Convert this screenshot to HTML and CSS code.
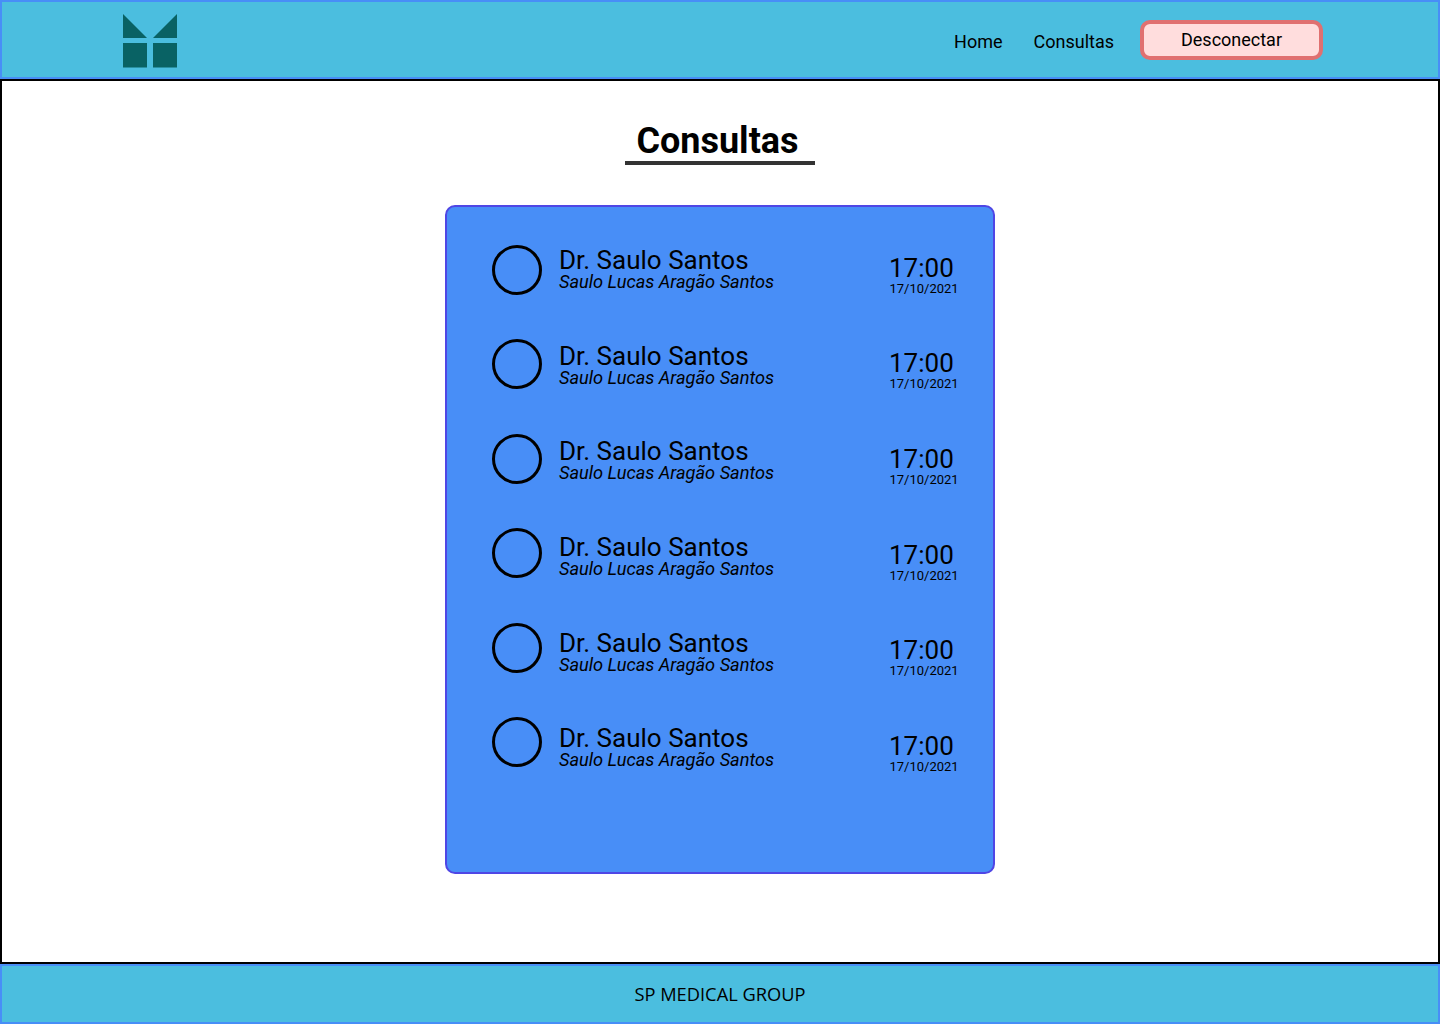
FILE: index.html
```html
<!DOCTYPE html>
<html lang="en">
<head>
    <meta charset="UTF-8">
    <meta name="viewport" content="width=device-width, initial-scale=1.0">
    <title>Consultas</title>
    <link rel="stylesheet" href="styles.css">
</head>
<body>
    <header class="topbar">
        <svg class="logo" width="54" height="54" viewBox="0 0 54 54">
            <path d="M0 0 L24 24 H0 Z M54 0 L30 24 H54 Z M0 29 H24 V53.5 H0 Z M30 29 H54 V53.5 H30 Z" fill="#096264"/>
        </svg>
        <nav class="nav">
            <a class="nav-link" href="#">Home</a>
            <a class="nav-link" href="#">Consultas</a>
            <a class="logout" href="#">Desconectar</a>
        </nav>
    </header>
    <main class="content">
        <h1 class="title">Consultas</h1>
        <section class="card">
            <div class="avatars">
                <div class="avatar"></div>
                <div class="avatar"></div>
                <div class="avatar"></div>
                <div class="avatar"></div>
                <div class="avatar"></div>
                <div class="avatar"></div>
            </div>
            <div class="rows">
                <div class="row">
                    <div class="names">
                        <div class="doctor">Dr. Saulo Santos</div>
                        <div class="patient">Saulo Lucas Aragão Santos</div>
                    </div>
                    <div class="when">
                        <div class="time">17:00</div>
                        <div class="date">17/10/2021</div>
                    </div>
                </div>
                <div class="row">
                    <div class="names">
                        <div class="doctor">Dr. Saulo Santos</div>
                        <div class="patient">Saulo Lucas Aragão Santos</div>
                    </div>
                    <div class="when">
                        <div class="time">17:00</div>
                        <div class="date">17/10/2021</div>
                    </div>
                </div>
                <div class="row">
                    <div class="names">
                        <div class="doctor">Dr. Saulo Santos</div>
                        <div class="patient">Saulo Lucas Aragão Santos</div>
                    </div>
                    <div class="when">
                        <div class="time">17:00</div>
                        <div class="date">17/10/2021</div>
                    </div>
                </div>
                <div class="row">
                    <div class="names">
                        <div class="doctor">Dr. Saulo Santos</div>
                        <div class="patient">Saulo Lucas Aragão Santos</div>
                    </div>
                    <div class="when">
                        <div class="time">17:00</div>
                        <div class="date">17/10/2021</div>
                    </div>
                </div>
                <div class="row">
                    <div class="names">
                        <div class="doctor">Dr. Saulo Santos</div>
                        <div class="patient">Saulo Lucas Aragão Santos</div>
                    </div>
                    <div class="when">
                        <div class="time">17:00</div>
                        <div class="date">17/10/2021</div>
                    </div>
                </div>
                <div class="row">
                    <div class="names">
                        <div class="doctor">Dr. Saulo Santos</div>
                        <div class="patient">Saulo Lucas Aragão Santos</div>
                    </div>
                    <div class="when">
                        <div class="time">17:00</div>
                        <div class="date">17/10/2021</div>
                    </div>
                </div>
            </div>
        </section>
    </main>
    <footer class="footer">SP MEDICAL GROUP</footer>
</body>
</html>
```

FILE: styles.css
```css
* {
    box-sizing: border-box;
}
body {
    margin: 0;
    height: 1024px;
    display: flex;
    flex-direction: column;
    font-family: 'Roboto', sans-serif;
    color: #000;
    background-color: #fff;
}
.topbar {
    height: 79px;
    flex-shrink: 0;
    display: flex;
    align-items: center;
    justify-content: space-between;
    padding: 0 115px 0 121px;
    background-color: #4bbedf;
    border: 2px solid #488ef7;
}
.logo {
    margin-top: 2px;
}
.nav {
    display: flex;
    align-items: center;
}
.nav-link {
    font-size: 18px;
    color: #000;
    text-decoration: none;
    margin-right: 31px;
    padding-top: 3px;
}
.nav-link:nth-child(2) {
    margin-right: 26px;
}
.logout {
    width: 183px;
    height: 40px;
    display: flex;
    align-items: center;
    justify-content: center;
    font-size: 18px;
    color: #000;
    text-decoration: none;
    background-color: #ffdddd;
    border: 4px solid #e07070;
    border-radius: 10px;
}
.content {
    flex: 1;
    display: flex;
    flex-direction: column;
    align-items: center;
    border: 2px solid #000;
    padding-top: 39px;
}
.title {
    width: 190px;
    margin: 0 0 40px;
    height: 45px;
    padding-right: 5px;
    text-align: center;
    font-size: 36px;
    line-height: 42px;
    font-weight: 700;
    border-bottom: 4px solid #333;
}
.card {
    width: 550px;
    height: 669px;
    display: flex;
    padding: 17px 36px 0 45px;
    background-color: #488ef7;
    border: 2px solid #4f46e5;
    border-radius: 10px;
}
.avatars {
    display: flex;
    flex-direction: column;
    gap: 44.4px;
    padding-top: 21px;
    flex-shrink: 0;
}
.avatar {
    width: 50px;
    height: 50px;
    border: 3px solid #000;
    border-radius: 50%;
}
.rows {
    flex: 1;
    margin-left: 17px;
}
.row {
    height: 95.6px;
    display: flex;
    align-items: center;
}
.names {
    flex: 1;
    padding-bottom: 5px;
}
.doctor {
    font-size: 26px;
    line-height: 26px;
}
.patient {
    font-size: 18.2px;
    line-height: 18px;
    font-style: italic;
}
.when {
    width: 68px;
    padding-top: 7px;
}
.time {
    font-size: 26px;
    line-height: 26px;
}
.date {
    margin-top: 1px;
    margin-left: 0.5px;
    font-size: 13px;
    line-height: 14px;
    white-space: nowrap;
}
.footer {
    height: 60px;
    flex-shrink: 0;
    display: flex;
    align-items: center;
    justify-content: center;
    padding-bottom: 2px;
    font-family: 'Open Sans', sans-serif;
    font-size: 18.3px;
    background-color: #4bbedf;
    border: 2px solid #488ef7;
}
```
